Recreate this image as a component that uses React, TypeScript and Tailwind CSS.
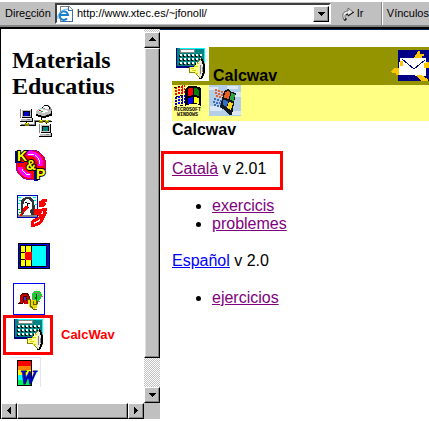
import type { ReactNode } from "react";

const LEFT_ICONS = [
  { name: "Xarxa", icon: NetworkIcon },
  { name: "K&P", icon: KPIcon },
  { name: "Gioconda", icon: PortraitIcon },
  { name: "Finestres", icon: PanelIcon },
  { name: "Lletres", icon: HeadsIcon },
];

const KEYS_X = [4, 8, 12, 16, 20, 24];
const KEYS_Y = [7, 11, 15];

interface IconProps {
  className: string;
  viewBox: string;
  children: ReactNode;
}

function PixelSvg({ className, viewBox, children }: IconProps) {
  return (
    <svg
      className={`block shrink-0 ${className}`}
      viewBox={viewBox}
      shapeRendering="crispEdges"
      aria-hidden="true"
    >
      {children}
    </svg>
  );
}

function PageIcon() {
  return (
    <PixelSvg className="h-4 w-4" viewBox="0 0 16 16">
      <path d="M3 0h9l3 3v13H3z" fill="#fff" stroke="#808080" />
      <path d="M12 0v4h4v12H4v-1h11V5h-4V0z" fill="#3a6ea5" />
      <g shapeRendering="auto" fill="none">
        <path d="M10 12.5A4.3 4.3 0 1 1 11 9H3" stroke="#1c7fd0" strokeWidth="2" />
        <path d="M1 13C-1 9 5 3 11 3" stroke="#63b5ef" />
      </g>
    </PixelSvg>
  );
}

function GoIcon() {
  return (
    <svg className="h-4 w-4" viewBox="0 0 16 16" aria-hidden="true">
      <path
        d="M3 14C0 8 3 5 7 5V2l5 4-5 4V8C4 8 3 10 5 14z"
        fill="#e8e8e8"
        stroke="#666"
      />
      <path d="M7 10l6-4M3 14h2v-2M5 9l2-1" stroke="#000" fill="none" />
    </svg>
  );
}

function Computer({ x, y, screen }: { x: number; y: number; screen: string }) {
  return (
    <g transform={`translate(${x} ${y})`}>
      <path d="M1 0h11v9H1zM0 9h12v4H0z" fill="#c0c0c0" />
      <path d="M1 0h10v1H2v8H1zM0 9h11v1H1v2H0z" fill="#fff" />
      <path d="M0 0h1v9H0z" fill="#848484" />
      <path d="M12 0v9h1v4H0v-1h12V9H2V8h9V0z" fill="#000" />
      <path d="M3 2h7v5H3z" fill="#000" />
      <path d="M4 3h5v4H4z" fill={screen} />
      <path d="M7 10h3v1H7z" fill="#808080" />
    </g>
  );
}

function NetworkIcon() {
  return (
    <PixelSvg className="h-8 w-12" viewBox="-12 0 48 32">
      <path d="M0 20h15v-4h17v1H16v4H0zM21 12h1v4h-1zM6 17h1v3H6zM26 17h1v3h-1z" fill="#000" />
      <path d="M1 19h13v-4h17v1H15v4H1z" fill="#848484" />
      <path d="M5 18h4v3H5zM19 15h4v3h-4zM25 15h4v3h-4z" fill="#848400" />
      <path d="M6 18h2v1H6zM20 15h2v1h-2zM26 15h2v1h-2z" fill="#ff0" />
      <Computer x={0} y={4} screen="#0000c8" />
      <Computer x={19} y={19} screen="#008484" />
      <path d="M16 6l5-3 3-3h4l3 3 1 2v5l-7 3h-3l-6-3z" fill="#848484" />
      <path d="M16 6l5-3 10 2v3l-7 3-8-2z" fill="#c0c0c0" />
      <path d="M17 6l4-2 8 2-5 2zM24 1h4l2 2-3 1-5-1z" fill="#fff" />
      <path d="M16 9h2v1h3v1h5v-1h3V9h2V6h1v5h-3v1h-3v1h-5v-1h-3v-1h-2zM24 0h4v1h-4zM28 1h1v1h-1zM29 2h1v2h-1zM22 2h1v1h-1z" fill="#000" />
      <path d="M19 5h2v1h-2z" fill="#f00" />
      <path d="M21 6h2v1h-2z" fill="#00c000" />
    </PixelSvg>
  );
}

function KPIcon() {
  return (
    <PixelSvg className="h-8 w-12" viewBox="-7 0 48 32">
      <circle cx="16" cy="16" r="15" fill="#f00" stroke="#a000a0" />
      <path d="M12 5c8-2 14 3 14 12M5 18c1 5 4 8 11 9" fill="none" stroke="#f0f" strokeWidth="5" />
      <path d="M13 6c7-2 11 2 12 9M7 20c1 3 4 6 8 6" fill="none" stroke="#fff" strokeDasharray="6 1" />
      <circle cx="16" cy="16" r="6" fill="#d00020" />
      <path d="M0 2h4v10l6 2H0zM19 21h4v11h-4z" fill="#0000a0" />
      <g
        fill="#ff0"
        stroke="#000"
        strokeWidth="2"
        paintOrder="stroke"
        className="font-['Liberation_Sans',sans-serif] text-[14px] font-bold"
      >
        <text x="2" y="12">K</text>
        <text x="11" y="21">&amp;</text>
        <text x="21" y="30">P</text>
      </g>
    </PixelSvg>
  );
}

function PortraitIcon() {
  return (
    <PixelSvg className="h-9 w-12" viewBox="-9 -2 48 36">
      <path d="M0 0h21v23H0z" fill="#0000c0" />
      <path d="M1 1h19v21H1z" fill="#dff" />
      <path d="M1 2h3v1H1zM2 5h2v1H2zM16 2h3v1h-3zM17 5h2v1h-2zM1 8h2v1H1zM18 9h2v1h-2z" fill="#00e0e0" />
      <path d="M1 14h2v1H1zM2 17h2v1H2zM1 19h1v1H1z" fill="#00c000" />
      <path d="M4 20V5l2-2 3-1h5l3 4 1 8 2 3v4z" fill="#333" />
      <path d="M1 20h19v2H1z" fill="#848484" />
      <path d="M7 6l2-2h3l3 4v5l-2 3 1 4H6l2-5-2-3z" fill="#fff" />
      <path d="M8 7h2v1H8zM11 8h2v1h-2zM10 8h1v3h-1zM9 12h3v1H9z" fill="#000" />
      <path d="M3 21l1-3 2-1v-4l2-2h3v3l-3 2-1 2H5v3z" fill="#f00" />
      <g fill="none" stroke="#f00" strokeWidth="3">
        <path d="M30 5h-3l-4 3v2h3l2-2" />
        <path d="M17 15h8l5-1M25 14l-3 5 2 2h3l2-4M28 16l-2 7-3 5-5 2h-3v-3l7-4 4-2" />
      </g>
      <path d="M17 15h4v5h-4z" fill="#f00" />
    </PixelSvg>
  );
}

function PanelIcon() {
  return (
    <PixelSvg className="h-[30px] w-12" viewBox="-10 -2 48 30">
      <path d="M0 0h32v26H0z" fill="#000" />
      <path d="M1 1h30v24H1z" fill="#0000ff" />
      <path d="M2 2h27v22H2z" fill="#000" />
      <path d="M3 3h4v6H3zM8 3h5v6H8zM3 10h4v6H3zM3 17h4v6H3zM8 17h5v6H8z" fill="#ff0" />
      <path d="M7 9h7v8H7z" fill="#f00" />
      <path d="M14 3h14v20H14z" fill="#0ff" />
    </PixelSvg>
  );
}

function HeadsIcon() {
  return (
    <PixelSvg className="h-8 w-12" viewBox="-5 0 48 32">
      <path d="M0.5 0.5h31v31H0.5z" fill="#fff" stroke="#00f" />
      <path d="M7 12l3-2h5l1 4v7h-5l-1-2-1 2H5v-1l2-1z" fill="#c00000" />
      <path d="M8 12l2-2h4l2 3v6M10 19v-4l1-2h2v5M5 20h5" fill="none" stroke="#400" />
      <path d="M11 14h2v3h-2z" fill="#4040c0" />
      <path d="M19 10l3-2h5l2 4-1 3-2 3h-5l-2-3z" fill="#00e020" />
      <path d="M20 9h6M19 12v4l3 2h5M22 11h4M26 10v3h4" fill="none" stroke="#848484" />
      <path d="M23 11h1v5h-2v-2h1z" fill="#004000" />
      <path d="M15 17h8l2 3-1 5-4 1-4-2z" fill="#e8d800" />
      <path d="M15 16h2v6l3 4h4M20 18v3h3v-3M23 16l2 5" fill="none" stroke="#606000" />
    </PixelSvg>
  );
}

function CalcIcon() {
  return (
    <PixelSvg className="h-8 w-8" viewBox="0 0 32 32">
      <path d="M0 0h29v20H0z" fill="#008484" />
      <path d="M4 0h25v20h-1V1H4z" fill="#0ff" />
      <path d="M0 0h1v20h-1zM1 18h18v2H1z" fill="#000084" />
      <path d="M4 1h15v4H4z" fill="#848484" />
      <path d="M5 2h13v2H5z" fill="#fff" />
      {KEYS_Y.map((y) =>
        KEYS_X.map((x) => (
          <g key={`${x}-${y}`}>
            <path d={`M${x - 1} ${y}h2v2h-2z`} fill="#000" />
            <path d={`M${x} ${y - 1}h2v2h-2z`} fill="#fff" />
          </g>
        )),
      )}
      <g transform="translate(-1 0)">
        <path d="M14 19h5l6-8h2l3 5v9l-3 6h-2l-6-6h-5z" fill="#848400" />
        <path d="M15 19h4l6-7v17l-6-5h-4z" fill="#ffff84" />
        <path d="M16 20h3v1h-3zM17 22h4v1h-4zM19 18h4v1h-4zM20 25h3v1h-3zM22 15h2v1h-2z" fill="#d6d600" />
        <path d="M25 12h2l2 5v8l-2 5h-2l-1-3V15z" fill="#e8e8e8" />
        <path d="M25 17h1v9h-1zM27 19h1v5h-1z" fill="#848484" />
        <path d="M26 10h1v1h1v2h1v3h1v9h-1v3h-1v2h-1v1h-3v-1h2v-2h1v-3h1v-9h-1v-3h-1z" fill="#000" />
      </g>
    </PixelSvg>
  );
}

function WordIcon() {
  return (
    <PixelSvg className="h-[30px] w-8" viewBox="-7 -3 32 30">
      <path d="M-7-3H24v30h-1V-2H-7z" fill="#e4e4fc" />
      <path d="M0 0h15v26H0z" fill="#000" />
      <path d="M1 1h13v5H1z" fill="#f00" />
      <path d="M1 6h13v4H1z" fill="#ff8400" />
      <path d="M1 10h13v5H1z" fill="#ff0" />
      <path d="M1 15h13v5H1z" fill="#0ff" />
      <path d="M1 20h13v5H1z" fill="#00f050" />
      <text
        x="3"
        y="24"
        fill="#0000c8"
        stroke="#000060"
        strokeWidth="1"
        paintOrder="stroke"
        className="font-['Liberation_Serif',serif] text-[18px] font-bold italic"
      >
        W
      </text>
    </PixelSvg>
  );
}

function Windows3Icon() {
  return (
    <PixelSvg className="h-9 w-8" viewBox="-2 0 32 36">
      <path d="M1 3l10-2M1 6l10-2M1 9l10-2" stroke="#f00" strokeWidth="2" strokeDasharray="2 1" />
      <path d="M1 13l10-2M1 16l10-2M1 19l10-2" stroke="#00f" strokeWidth="2" strokeDasharray="2 1" />
      <path d="M0 2h2M4 1h2M2 11h2M6 10h3M1 21h2M6 20h3" stroke="#000" />
      <path d="M11 4l3-3h8l5 2v18l-4-2h-7l-5 2z" fill="#000" />
      <path d="M14 4l2-1h3v7l-5 1z" fill="#f00" />
      <path d="M20 3h2l3 2v6l-5-1z" fill="#008400" />
      <path d="M14 13l5-1v6l-5 1z" fill="#00f" />
      <path d="M20 12l5 1v6l-5-1z" fill="#ff0" />
      <g className="font-['Liberation_Mono',monospace] text-[5px] font-bold" fill="#000">
        <text x="0" y="26">MICROSOFT</text>
        <text x="3" y="31">WINDOWS</text>
      </g>
    </PixelSvg>
  );
}

function Windows95Icon() {
  return (
    <PixelSvg className="h-8 w-8" viewBox="0 0 32 32">
      <path d="M0 0h32v31H0z" fill="#b5cee7" />
      <path d="M0 2h9v3H0zM18 1h11v3H18zM1 21h12v5H1zM22 26h10v4H22zM26 7h6v5h-6z" fill="#dce8f4" />
      <path d="M6 5l8 2M6 8l8 2M7 11l7 2" stroke="#e86030" strokeWidth="2" strokeDasharray="2 1" />
      <path d="M5 14l8 2M4 17l9 2M5 20l8 2" stroke="#4070b8" strokeWidth="2" strokeDasharray="2 1" />
      <path d="M15 6l4-2 4 3 4 1-2 10-2 12-3 0-4-5-5-3z" fill="#101820" />
      <path d="M16 7l4-1 1 2-1 6-5-1z" fill="#e86020" />
      <path d="M22 8l4 1-1 7-4-1z" fill="#30a040" />
      <path d="M14 15l5 1-1 6-4-2z" fill="#3070c8" />
      <path d="M20 17l4 1-2 7-4-2z" fill="#f8d820" />
    </PixelSvg>
  );
}

function MailIcon() {
  return (
    <PixelSvg className="h-8 w-[38px]" viewBox="0 0 38 32">
      <path d="M7 0h31v31H7z" fill="#000084" />
      <path
        d="M23 8l3-5 1-2h2v3h4v2h-2l-1 5zM0 21l4-3h4v7H5v-2H1zM25 25h6l3 3 3 1v2h-7zM33 12h5v6h-3z"
        fill="#ffc600"
      />
      <path d="M9 8h26v4h1v4h-1v10H24v-1H8V12h1z" fill="#fff" />
      <path d="M9 11h3v5H9zM33 13h4v3h-2v2h-2zM25 25h6v3h-3z" fill="#ffc600" />
      <path d="M11 9l12 10L34 10" fill="none" stroke="#000084" />
    </PixelSvg>
  );
}

const ARROWS = {
  up: "M4 5h1V4h1V3h1v1h1v1h1v1h1v1H3V6h1z",
  down: "M3 4h7v1H9v1H8v1H7v1H6V7H5V6H4V5H3z",
  left: "M8 2v7H7V8H6V7H5V6H4V5h1V4h1V3h1V2z",
  right: "M4 2v7h1V8h1V7h1V6h1V5H7V4H6V3H5V2z",
};

function ArrowButton({ dir, label }: { dir: keyof typeof ARROWS; label: string }) {
  return (
    <button
      type="button"
      aria-label={label}
      className="flex h-4 w-4 shrink-0 items-center justify-center border border-t-white border-r-black border-b-black border-l-white bg-[#c0c0c0] shadow-[inset_-1px_-1px_0_#848484]"
    >
      <PixelSvg className="h-3 w-3" viewBox="0 0 12 12">
        <path d={ARROWS[dir]} />
      </PixelSvg>
    </button>
  );
}

function AddressBar() {
  return (
    <header className="flex h-[27px] items-center overflow-hidden border-t-2 border-b-2 border-t-white border-b-[#848484] bg-[#c0c0c0] text-[11px] whitespace-nowrap">
      <label htmlFor="address" className="w-[55px] shrink-0 pl-[5px]">
        Dire<u>c</u>ción
      </label>
      <div className="flex h-[21px] w-[276px] shrink items-center border-2 border-t-[#404040] border-r-white border-b-white border-l-[#404040] bg-white">
        <PageIcon />
        <input
          id="address"
          type="text"
          defaultValue="http://www.xtec.es/~jfonoll/"
          className="min-w-0 flex-1 pl-1 outline-none"
        />
        <ArrowButton dir="down" label="Historial" />
      </div>
      <button type="button" className="flex h-full w-[50px] shrink-0 items-center pl-[10px]">
        <GoIcon />
        Ir
      </button>
      <span className="flex h-full shrink-0 items-center border-l border-[#848484] pl-[5px] shadow-[inset_1px_0_0_#fff]">
        Vínculos
      </span>
    </header>
  );
}

function Sidebar() {
  return (
    <aside className="flex w-[160px] shrink-0 border-l border-black">
      <div className="flex min-w-0 flex-1 flex-col">
        <div className="flex flex-1 flex-col pt-[18px] pb-4">
          <h1 className="pl-[11px] font-['Liberation_Serif',serif] text-[24px] leading-[26px] font-bold">
            Materials Educatius
          </h1>
          <nav className="flex flex-col pt-[6px]">
            <div className="flex flex-col gap-3 pl-[7px]">
              {LEFT_ICONS.map(({ name, icon: Icon }) => (
                <a key={name} href="#" aria-label={name}>
                  <Icon />
                </a>
              ))}
            </div>
            <a href="#" className="flex items-center gap-2 pl-[2px] text-[13px] font-bold text-[#f00]">
              <span className="flex h-10 w-[50px] border-3 border-[#f00] pt-px pl-2">
                <CalcIcon />
              </span>
              CalcWav
            </a>
            <a href="#" aria-label="Word" className="pt-[2px] pl-[9px]">
              <WordIcon />
            </a>
          </nav>
        </div>
        <div className="flex">
          <ArrowButton dir="left" label="Esquerra" />
          <div className="h-4 flex-1 border border-t-white border-r-black border-b-black border-l-white bg-[#c0c0c0] shadow-[inset_-1px_-1px_0_#848484]" />
          <ArrowButton dir="right" label="Dreta" />
        </div>
      </div>
      <div className="flex w-4 flex-col bg-[#c0c0c0]">
        <div className="h-[3px] bg-[repeating-conic-gradient(#c0c0c0_0_25%,#fff_0_50%)] bg-size-[2px_2px]" />
        <ArrowButton dir="up" label="Amunt" />
        <div className="flex-1 border border-t-white border-r-black border-b-black border-l-white shadow-[inset_-1px_-1px_0_#848484,inset_1px_0_0_#e0e0e0]" />
        <div className="h-[29px] bg-[repeating-conic-gradient(#c0c0c0_0_25%,#fff_0_50%)] bg-size-[2px_2px]" />
        <ArrowButton dir="down" label="Avall" />
        <div className="h-4" />
      </div>
    </aside>
  );
}

function Content() {
  return (
    <main className="min-w-0 flex-1 border-t border-[#002060] pt-[17px] pl-3 text-[16px] leading-[18px]">
      <div className="flex h-[38px] bg-[#949400]">
        <div className="mb-1 w-[37px] bg-white pt-px pl-1">
          <CalcIcon />
        </div>
        <span className="flex-1 self-end pl-1 font-bold">Calcwav</span>
        <a href="#" aria-label="Correu" className="pt-[3px]">
          <MailIcon />
        </a>
      </div>
      <div className="flex h-9 gap-[5px] bg-[#ffff84]">
        <Windows3Icon />
        <Windows95Icon />
      </div>
      <h2 className="font-bold">Calcwav</h2>
      <p className="mt-3 -ml-[11px] h-[39px] w-[122px] border-3 border-[#f00] pt-[6px] pl-2">
        <a href="#" className="text-[#800080] underline">Català</a> v 2.01
      </p>
      <ul className="mt-[7px] list-disc pl-10">
        <li>
          <a href="#" className="text-[#800080] underline">exercicis</a>
        </li>
        <li>
          <a href="#" className="text-[#800080] underline">problemes</a>
        </li>
      </ul>
      <p className="mt-[19px]">
        <a href="#" className="text-[#0000ff] underline">Español</a> v 2.0
      </p>
      <ul className="mt-[19px] list-disc pl-10">
        <li>
          <a href="#" className="text-[#800080] underline">ejercicios</a>
        </li>
      </ul>
    </main>
  );
}

export default function App() {
  return (
    <div className="flex min-h-screen flex-col bg-white pb-[2px] font-['Liberation_Sans',Arial,sans-serif] text-black">
      <AddressBar />
      <div className="flex flex-1 border-t-2 border-black">
        <Sidebar />
        <Content />
      </div>
    </div>
  );
}
